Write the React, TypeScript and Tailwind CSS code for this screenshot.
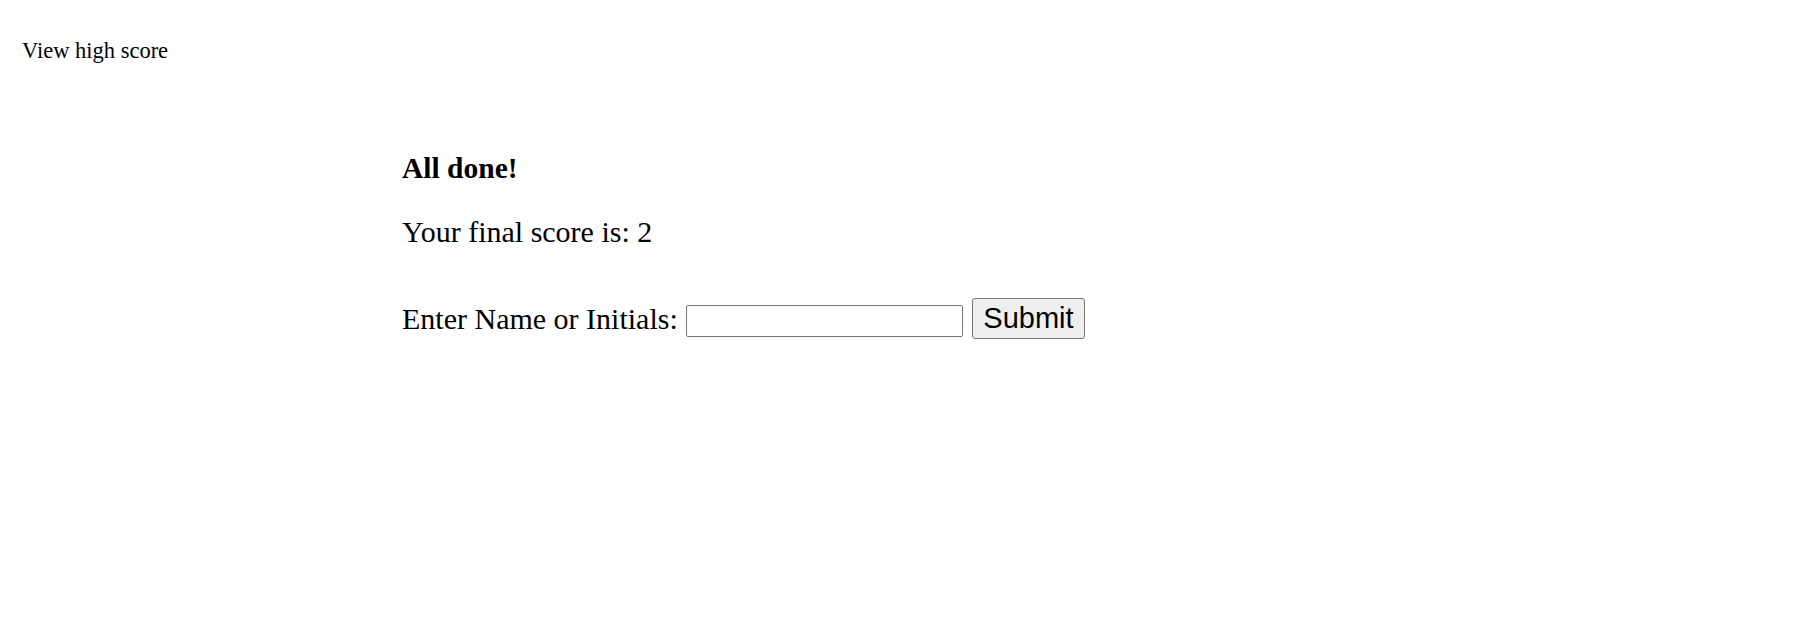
import React, { useState } from 'react';

const serif = { fontFamily: '"Liberation Serif", "Times New Roman", serif' };

export default function App() {
    const [initials, setInitials] = useState('');

    return (
        <div className="min-h-screen bg-white text-black" style={serif}>
            {/* Header */}
            <header className="pt-[38px] pl-[22px]">
                <a href="#" className="text-[22.5px] leading-[25px] text-black">View high score</a>
            </header>

            {/* Quiz end card */}
            <main className="pl-[402px] pt-[86px]">
                <h2 className="text-[29.5px] leading-[34px] font-bold">All done!</h2>
                <p className="mt-[30px] text-[30px] leading-[34px]">Your final score is: 2</p>

                <form className="mt-[49px] flex items-start" onSubmit={(e) => e.preventDefault()}>
                    <label htmlFor="initials" className="w-[284px] mt-[4px] text-[30px] leading-[34px] whitespace-nowrap">
                        Enter Name or Initials:
                    </label>
                    <input
                        id="initials"
                        value={initials}
                        onChange={(e) => setInitials(e.target.value)}
                        className="mt-[7px] w-[277px] h-[32px] px-[2px] bg-white border border-[#767676] rounded-[2px] text-[20px] outline-none"
                    />
                    <button
                        type="submit"
                        className="ml-[9px] w-[113px] h-[41px] bg-[#efefef] border border-[#767676] rounded-[3px] text-[29px] leading-none text-black"
                        style={{ fontFamily: '"Liberation Sans", Arial, sans-serif' }}
                    >
                        Submit
                    </button>
                </form>
            </main>
        </div>
    );
}
